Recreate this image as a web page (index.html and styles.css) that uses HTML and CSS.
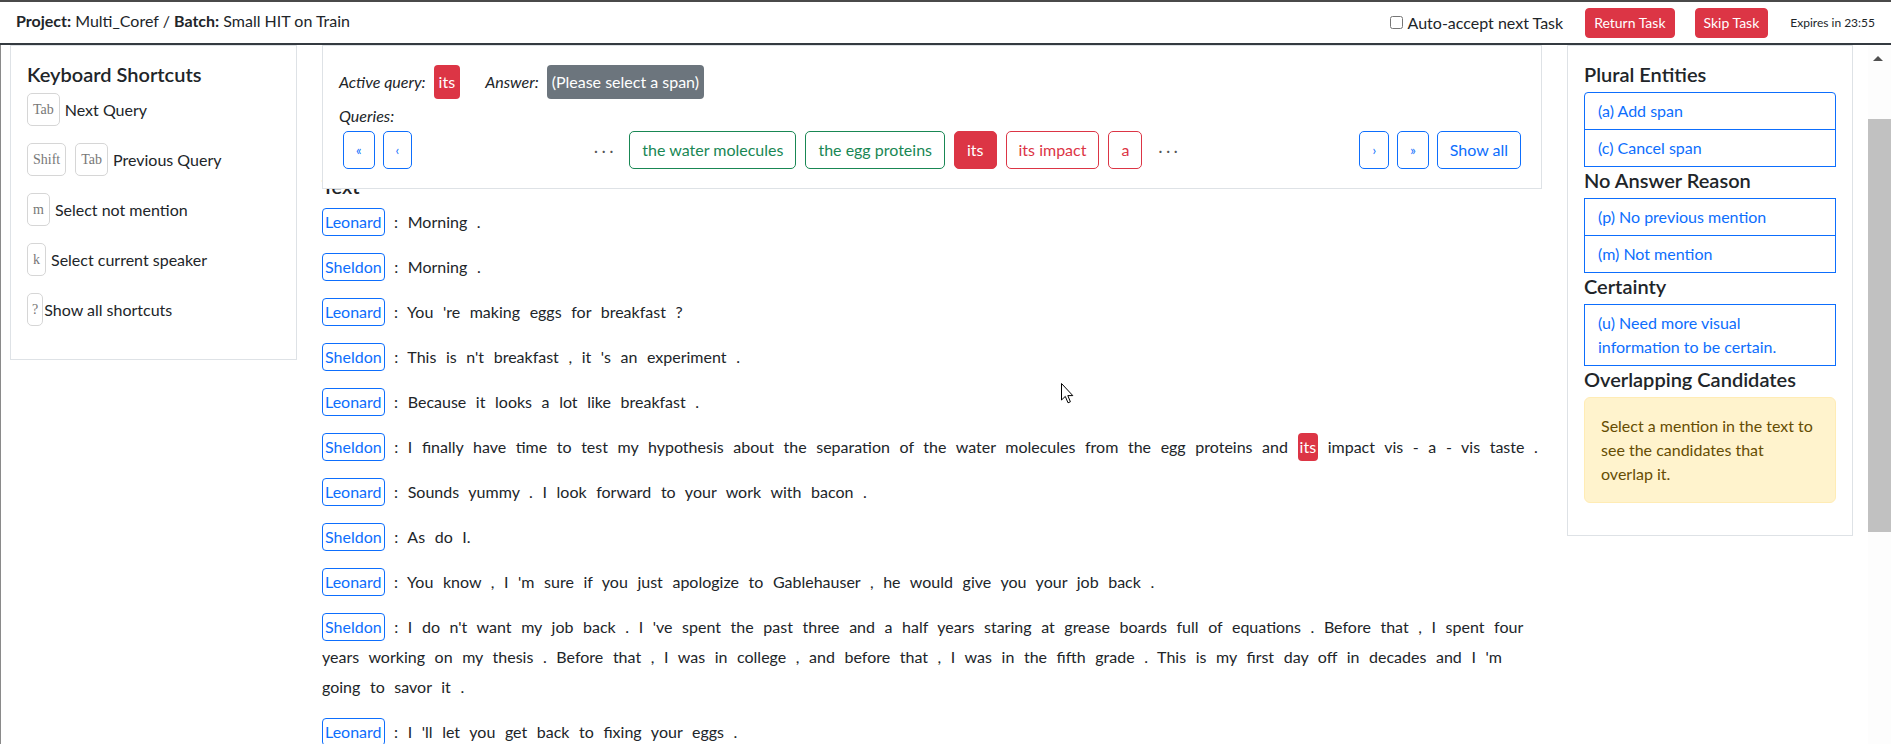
FILE: index.html
```html
<!DOCTYPE html>
<html lang="en">
<head>
<meta charset="utf-8">
<title>Multi_Coref</title>
<link rel="stylesheet" href="styles.css">
</head>
<body>
<header class="topbar">
  <div class="project"><b>Project:</b> Multi_Coref / <b>Batch:</b> Small HIT on Train</div>
  <div class="actions">
    <label class="auto"><input type="checkbox"> Auto-accept next Task</label>
    <button class="btn-task">Return Task</button>
    <button class="btn-task">Skip Task</button>
    <span class="expires">Expires in 23:55</span>
  </div>
</header>

<main class="main">
  <aside class="panel left">
    <h5 class="title">Keyboard Shortcuts</h5>
    <div class="shortcut"><kbd>Tab</kbd><span>Next Query</span></div>
    <div class="shortcut"><kbd class="pair">Shift</kbd><kbd>Tab</kbd><span>Previous Query</span></div>
    <div class="shortcut"><kbd>m</kbd><span>Select not mention</span></div>
    <div class="shortcut"><kbd>k</kbd><span>Select current speaker</span></div>
    <div class="shortcut"><kbd class="tight">?</kbd><span class="close">Show all shortcuts</span></div>
  </aside>

  <section class="center">
    <div class="query-box">
      <div class="qrow">
        <i class="qlabel">Active query:</i>
        <span class="badge red">its</span>
        <i class="qlabel answer">Answer:</i>
        <span class="badge gray">(Please select a span)</span>
      </div>
      <div class="qlabel queries"><i>Queries:</i></div>
      <div class="chips">
        <div class="group">
          <button class="btn blue arrow">«</button>
          <button class="btn blue arrow">‹</button>
        </div>
        <div class="group mid">
          <span class="dots">· · ·</span>
          <button class="btn green">the water molecules</button>
          <button class="btn green">the egg proteins</button>
          <button class="btn solid-red">its</button>
          <button class="btn red-o">its impact</button>
          <button class="btn red-o">a</button>
          <span class="dots">· · ·</span>
        </div>
        <div class="group">
          <button class="btn blue arrow">›</button>
          <button class="btn blue arrow">»</button>
          <button class="btn blue">Show all</button>
        </div>
      </div>
    </div>

    <h5 class="title text-title">Text</h5>
    <div class="dialog">
      <p class="turn"><span class="spk">Leonard</span> : Morning .</p>
      <p class="turn"><span class="spk">Sheldon</span> : Morning .</p>
      <p class="turn"><span class="spk">Leonard</span> : You 're making eggs for breakfast ?</p>
      <p class="turn"><span class="spk">Sheldon</span> : This is n't breakfast , it 's an experiment .</p>
      <p class="turn"><span class="spk">Leonard</span> : Because it looks a lot like breakfast .</p>
      <p class="turn"><span class="spk">Sheldon</span> : I finally have time to test my hypothesis about the separation of the water molecules from the egg proteins and <span class="hl">its</span> impact vis - a - vis taste .</p>
      <p class="turn"><span class="spk">Leonard</span> : Sounds yummy . I look forward to your work with bacon .</p>
      <p class="turn"><span class="spk">Sheldon</span> : As do I.</p>
      <p class="turn"><span class="spk">Leonard</span> : You know , I 'm sure if you just apologize to Gablehauser , he would give you your job back .</p>
      <p class="turn"><span class="spk">Sheldon</span> : I do n't want my job back . I 've spent the past three and a half years staring at grease boards full of equations . Before that , I spent four years working on my thesis . Before that , I was in college , and before that , I was in the fifth grade . This is my first day off in decades and I 'm going to savor it .</p>
      <p class="turn"><span class="spk">Leonard</span> : I 'll let you get back to fixing your eggs .</p>
    </div>
  </section>

  <aside class="panel right">
    <h5 class="title">Plural Entities</h5>
    <div class="list first">
      <div class="item">(a) Add span</div>
      <div class="item">(c) Cancel span</div>
    </div>
    <h5 class="title sub">No Answer Reason</h5>
    <div class="list">
      <div class="item">(p) No previous mention</div>
      <div class="item">(m) Not mention</div>
    </div>
    <h5 class="title sub">Certainty</h5>
    <div class="list">
      <div class="item">(u) Need more visual information to be certain.</div>
    </div>
    <h5 class="title sub">Overlapping Candidates</h5>
    <div class="alert">Select a mention in the text to see the candidates that overlap it.</div>
  </aside>

  <div class="scrollbar">
    <div class="sb-arrow"></div>
    <div class="sb-thumb"></div>
  </div>
</main>

<svg class="cursor" width="13" height="21" viewBox="0 0 13 21"><path d="M0.5 0.5 L0.5 17 L4.3 13.4 L7 19.8 L9.4 18.8 L6.8 12.6 L11.8 12.6 Z" fill="#fff" stroke="#000" stroke-width="1"/></svg>
</body>
</html>
```
FILE: styles.css
```css
* { box-sizing: border-box; }
html, body { margin: 0; height: 100%; }
body {
  font-family: Lato, "Segoe UI", "Noto Sans", sans-serif;
  font-size: 16px;
  line-height: 1.5;
  color: #212529;
  background: #fff;
  border-top: 2px solid #4a4a4a;
  overflow: hidden;
  position: relative;
}

/* header */
.topbar {
  height: 43px;
  border-bottom: 2px solid #343a40;
  display: flex;
  align-items: center;
  justify-content: space-between;
  padding: 0 16px 0 16px;
}
.project { font-size: 16px; padding-bottom: 3px; }
.project b { font-weight: 700; }
.actions { display: flex; align-items: center; }
.auto { display: flex; align-items: center; gap: 5px; font-size: 16px; margin-right: 22px; }
.auto input { width: 13px; height: 13px; margin: 0; }
.btn-task {
  font-family: inherit;
  font-size: 14px;
  line-height: 22px;
  padding: 3px 8px;
  color: #fff;
  background: #dc3545;
  border: 1px solid #dc3545;
  border-radius: 4px;
  margin-right: 20px;
}
.expires { font-size: 12px; margin-left: 2px; }

/* main area */
.main {
  display: flex;
  align-items: flex-start;
  height: calc(100vh - 45px);
  border-left: 1px solid #8a8a8a;
  padding-left: 9px;
  overflow: hidden;
}
.panel {
  flex: none;
  border: 1px solid #dee2e6;
  padding: 16px;
  background: #fff;
}
.left { width: 287px; padding-bottom: 17px; }
.right { width: 286px; }
.center { flex: 1; min-width: 0; margin: 0 25px; }

.title {
  font-size: 20px;
  font-weight: 600;
  line-height: 24px;
  margin: 0 0 7px;
}

/* shortcuts */
.shortcut {
  display: flex;
  align-items: center;
  gap: 5px;
  margin-bottom: 17px;
}
.shortcut:last-child { margin-bottom: 16px; }
kbd {
  display: inline-flex;
  align-items: center;
  justify-content: center;
  height: 33px;
  padding: 0 5px;
  border: 1px solid #d6d6d6;
  border-radius: 5px;
  background: #fff;
  font-family: "Liberation Serif", "DejaVu Serif", serif;
  font-size: 14px;
  color: #777;
}
kbd.pair { margin-right: 4px; }
kbd.tight { padding: 0 4px; }
.shortcut .close { margin-left: -4px; }

/* query box */
.query-box {
  position: relative;
  z-index: 1;
  background: #fff;
  border: 1px solid #dee2e6;
  padding: 19px 16px 19px;
  margin-bottom: -15px;
}
.qrow { display: flex; align-items: baseline; }
.qlabel { font-style: italic; }
.badge {
  display: inline-block;
  color: #fff;
  padding: 5px 5px;
  line-height: 24px;
  border-radius: 4px;
  margin-left: 8px;
}
.badge.red { background: #dc3545; }
.badge.gray { background: #6c757d; }
.answer { margin-left: 25px; }
.queries { margin-top: 5px; line-height: 24px; }
.chips {
  display: flex;
  justify-content: space-between;
  align-items: center;
  padding: 0 4px;
  margin-top: 3px;
}
.group { display: flex; align-items: center; gap: 8px; }
.group.mid { gap: 9px; }
.dots { color: #555; font-size: 15px; margin: 0 7px; }
.btn {
  font-family: inherit;
  font-size: 16px;
  line-height: 24px;
  padding: 6px 12px;
  border-radius: 5px;
  background: #fff;
  border: 1px solid;
}
.btn.blue { color: #0d6efd; border-color: #0d6efd; }
.btn.arrow { font-size: 13px; padding: 6px 12px; }
.btn.green { color: #198754; border-color: #198754; }
.btn.solid-red { color: #fff; background: #dc3545; border-color: #dc3545; }
.btn.red-o { color: #dc3545; border-color: #dc3545; }

/* dialog text */
.text-title { margin-bottom: 9px; }
.turn {
  margin: 0 0 15px;
  line-height: 30px;
  word-spacing: 5.5px;
}
.spk {
  display: inline-block;
  color: #0d6efd;
  border: 1px solid #0d6efd;
  border-radius: 4px;
  padding: 1px 2px;
  line-height: 24px;
  word-spacing: 0;
}
.hl {
  display: inline-block;
  color: #fff;
  background: #dc3545;
  border-radius: 4px;
  padding: 2px 2px;
  line-height: 24px;
}

/* right panel */
.title.sub { margin-top: 1px; margin-bottom: 6px; }
.right > .title:first-child { margin-bottom: 6px; }
.list { display: flex; flex-direction: column; }
.item {
  color: #0d6efd;
  border: 1px solid #0d6efd;
  padding: 6px 14px 6px 13px;
  line-height: 24px;
}
.item + .item { margin-top: -1px; }
.list.first .item:first-child { border-radius: 4px 4px 0 0; }
.alert {
  margin-top: 0;
  margin-bottom: 16px;
  padding: 16px 22px 16px 16px;
  background: #fff3cd;
  border: 1px solid #ffecb5;
  border-radius: 6px;
  color: #664d03;
  line-height: 24px;
}

/* scrollbar */
.scrollbar {
  flex: none;
  width: 23px;
  margin-left: 15px;
  align-self: stretch;
  background: #fdfdfd;
  display: flex;
  flex-direction: column;
}
.sb-arrow {
  height: 26px;
  display: flex;
  align-items: center;
  justify-content: center;
}
.sb-arrow::before {
  content: "";
  border-left: 5px solid transparent;
  border-right: 5px solid transparent;
  border-bottom: 5px solid #505050;
  margin-left: -3px;
}
.sb-thumb {
  margin-top: 48px;
  height: 413px;
  background: #c1c1c1;
}

.cursor {
  position: absolute;
  left: 1061px;
  top: 381px;
}
```
